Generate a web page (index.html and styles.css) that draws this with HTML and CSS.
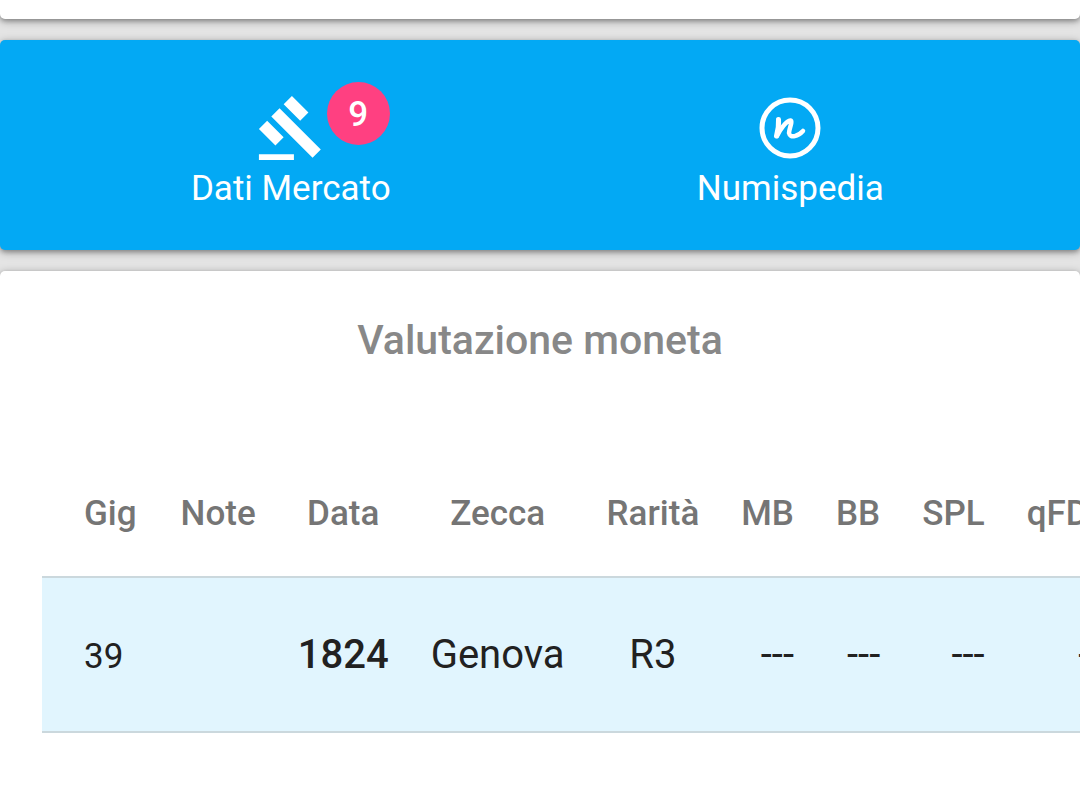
FILE: index.html
```html
<!DOCTYPE html>
<html lang="it">
<head>
<meta charset="utf-8">
<meta name="viewport" content="width=device-width, initial-scale=1">
<title>Valutazione moneta</title>
<link rel="stylesheet" href="styles.css">
</head>
<body>
<div class="card card-top"></div>
<nav class="card actions">
  <a class="action" href="#mercato">
    <span class="icon-wrap">
      <svg class="icon" viewBox="0 0 24 24" aria-hidden="true"><path d="M1 21h12v2H1zM5.245 8.07l2.83-2.827 14.14 14.142-2.828 2.828zM12.317 1l5.657 5.656-2.83 2.83-5.654-5.66zM3.825 9.485l5.657 5.657-2.828 2.828-5.657-5.657z"/></svg>
      <span class="badge">9</span>
    </span>
    <span>Dati Mercato</span>
  </a>
  <a class="action" href="#numispedia">
    <span class="icon-wrap">
      <svg class="icon" viewBox="0 0 70 70" aria-hidden="true"><g fill="none" stroke="currentColor" stroke-linecap="round" stroke-linejoin="round"><circle cx="35" cy="35" r="28" stroke-width="5"/><path stroke-width="5" d="M23.500 26.500Q24 34 21.500 43"/><path stroke-width="4.500" d="M22 43C25 37 31 28 35.500 27.500C38 28 34 36 34 40C35 46 43.500 43 48 38"/></g></svg>
    </span>
    <span>Numispedia</span>
  </a>
</nav>
<main class="card valuation">
  <h1 class="title">Valutazione moneta</h1>
  <div class="table-wrap">
    <table class="prices">
      <thead>
        <tr><th class="left">Gig</th><th>Note</th><th>Data</th><th>Zecca</th><th>Rarità</th><th class="num">MB</th><th class="num">BB</th><th class="num">SPL</th><th class="num">qFDC</th></tr>
      </thead>
      <tbody>
        <tr><td class="left small">39</td><td></td><td class="year">1824</td><td>Genova</td><td>R3</td><td class="num">---</td><td class="num">---</td><td class="num">---</td><td class="num">---</td></tr>
      </tbody>
    </table>
  </div>
</main>
</body>
</html>
```
FILE: styles.css
```css
* { box-sizing: border-box; }
html, body { height: 100%; }
body {
  margin: 0;
  display: flex;
  flex-direction: column;
  gap: 21px;
  overflow: hidden;
  background: #e4e4e4;
  font-family: Roboto, sans-serif;
  color: #212121;
}
.card {
  background: #fff;
  border-radius: 5px;
  box-shadow: 0 2px 8px rgba(0, 0, 0, .35), 0 2px 4px rgba(0, 0, 0, .2);
}
.card-top {
  flex: none;
  height: 19px;
  border-radius: 0 0 5px 5px;
}
.actions {
  flex: none;
  display: grid;
  grid-template-columns: 1fr 1fr;
  padding: 53px 40px 35px 41px;
  background: #03a9f4;
}
.action {
  display: flex;
  flex-direction: column;
  align-items: center;
  color: #fff;
  font-size: 35px;
  line-height: 52px;
  text-decoration: none;
}
.icon-wrap {
  position: relative;
  display: block;
  width: 70px;
  height: 70px;
}
.icon {
  display: block;
  width: 70px;
  height: 70px;
  fill: currentColor;
}
.badge {
  position: absolute;
  top: -11px;
  right: -64px;
  width: 63px;
  height: 63px;
  border-radius: 50%;
  background: #ff4081;
  font-size: 35px;
  font-weight: 500;
  line-height: 66px;
  text-align: center;
}
.valuation {
  flex: 1 0 auto;
  padding: 42px 0 0 42px;
  border-radius: 5px 5px 0 0;
}
.title {
  margin: 0 42px 84px 0;
  color: #888;
  font-size: 41px;
  font-weight: 500;
  line-height: 54px;
  text-align: center;
}
.table-wrap { overflow: hidden; }
.prices {
  border-collapse: collapse;
  white-space: nowrap;
}
.prices th, .prices td {
  padding: 0 21px;
  text-align: center;
}
.prices th {
  height: 126px;
  color: #757575;
  font-size: 35px;
  font-weight: 500;
}
.prices td {
  padding: 50px 21px 48px;
  border-top: 2px solid #cbd8dd;
  border-bottom: 2px solid #cbd8dd;
  background: #e1f5fe;
  font-size: 40px;
  line-height: 53px;
  vertical-align: baseline;
}
.prices .left { padding-left: 42px; padding-right: 23px; text-align: left; }
.prices .num { text-align: right; }
.prices .small { font-size: 35px; }
.prices .year { font-weight: 500; }
```
